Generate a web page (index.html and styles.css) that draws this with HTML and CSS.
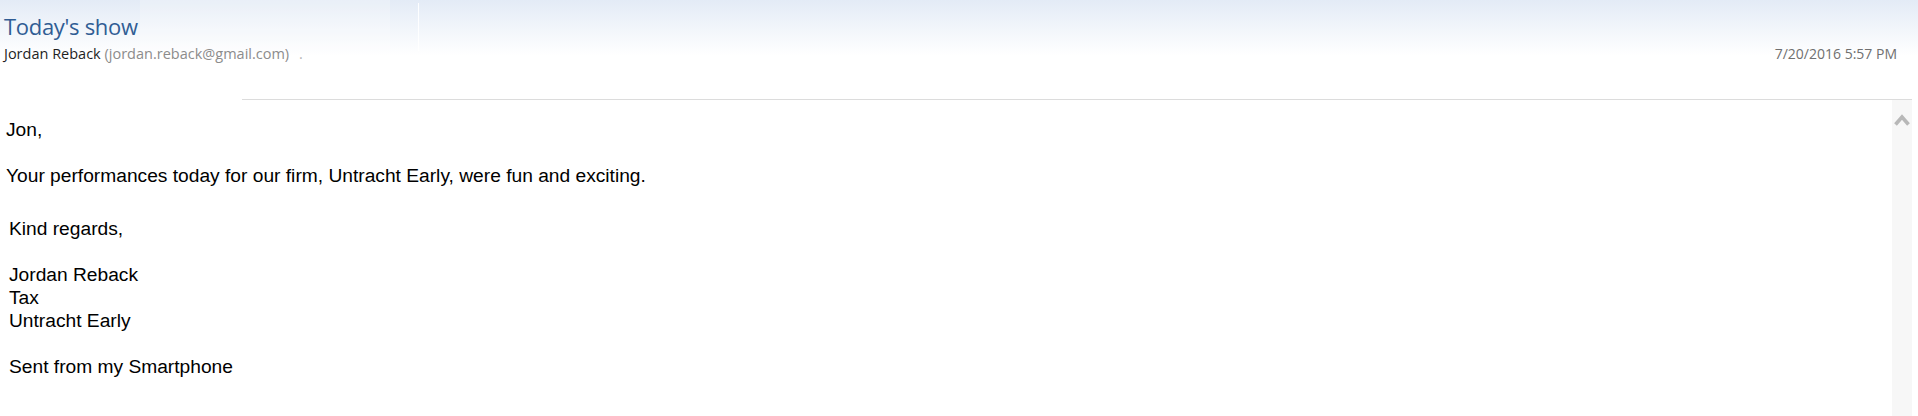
FILE: index.html
```html
<!DOCTYPE html>
<html lang="en">
	<head>
		<meta charset="UTF-8" />
		<meta name="viewport" content="width=device-width, initial-scale=1.0" />
		<title>Today's show</title>
		<link rel="stylesheet" href="styles.css">
	</head>
	<body>
		<header class="mail-header">
			<div class="header-pane"></div>
			<div class="header-glare"></div>
			<h1 class="subject">Today's show</h1>
			<div class="meta">
				<div class="sender">
					<span class="sender-name">Jordan Reback</span>
					<span class="sender-email">(jordan.reback@gmail.com)</span>
					<span class="sender-dot">.</span>
				</div>
				<div class="sent-date">7/20/2016 5:57 PM</div>
			</div>
		</header>

		<div class="divider"></div>

		<main class="mail-view">
			<div class="mail-body">
				<p>Jon,</p>
				<p>Your performances today for our firm, Untracht Early, were fun and exciting.</p>
				<div class="signature">
					<p>Kind regards,</p>
					<p>Jordan Reback<br>Tax<br>Untracht Early</p>
					<p>Sent from my Smartphone</p>
				</div>
			</div>
			<div class="scrollbar">
				<svg class="scroll-up" width="16" height="12" viewBox="0 0 16 12">
					<polyline points="1.5,10.5 8,3 14.5,10.5" fill="none" stroke="#b8b8b8" stroke-width="3.6" />
				</svg>
			</div>
		</main>
	</body>
</html>
```

FILE: styles.css
```css
body {
	margin: 0;
	background: #ffffff;
	font-family: "Liberation Sans", Arial, sans-serif;
	overflow: hidden;
}

/* Header with subject and sender */
.mail-header {
	position: relative;
	height: 80px;
	padding: 0 0 0 4px;
	background: linear-gradient(to bottom, #e3ebf6 0px, #f2f6fb 30px, #ffffff 56px);
	box-sizing: border-box;
}

.header-pane {
	position: absolute;
	left: 140px;
	top: 0;
	width: 250px;
	height: 52px;
	background: rgba(255, 255, 255, 0.22);
}

.header-glare {
	position: absolute;
	left: 418px;
	top: 3px;
	width: 1px;
	height: 48px;
	background: rgba(255, 255, 255, 0.9);
}

.subject {
	position: relative;
	margin: 0;
	padding-top: 11px;
	height: 33px;
	font-family: "Open Sans", "Noto Sans", sans-serif;
	font-weight: normal;
	font-size: 22px;
	line-height: 30px;
	color: #305d94;
	letter-spacing: -0.3px;
}

.meta {
	position: relative;
	display: flex;
	justify-content: space-between;
	align-items: baseline;
	padding-right: 21px;
	font-family: "Open Sans", "Noto Sans", sans-serif;
	font-size: 14.5px;
	line-height: 20px;
}

.sender-name {
	color: #1f1f1f;
}

.sender-email {
	color: #8c8c8c;
}

.sender-dot {
	color: #b5b5b5;
	margin-left: 6px;
}

.sent-date {
	color: #707070;
	font-size: 14px;
}

.divider {
	height: 1px;
	margin: 19px 6px 0 242px;
	background: #dcdcdc;
}

/* Message area */
.mail-view {
	display: flex;
	height: 330px;
}

.mail-body {
	flex: 1;
	padding: 18px 0 0 6px;
	font-size: 19.2px;
	line-height: 23px;
	color: #000000;
}

.mail-body p {
	margin: 0 0 23px;
}

.signature {
	padding-left: 3px;
	margin-top: 30px;
}

.scrollbar {
	width: 20px;
	margin-right: 6px;
	background: #f7f7f7;
	display: flex;
	justify-content: center;
	align-items: flex-start;
}

.scroll-up {
	margin-top: 14px;
}
```
